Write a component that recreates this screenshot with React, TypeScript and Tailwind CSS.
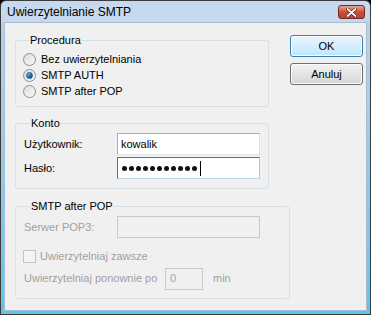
import React from 'react';

const font = { fontFamily: '"Liberation Sans", Arial, sans-serif' };

function Radio({ checked }: { checked?: boolean }) {
  return (
    <span className="w-[13px] h-[13px] rounded-full border border-[#8e8f8f] bg-gradient-to-br from-[#dcdcdc] to-[#fbfbfb] flex items-center justify-center shrink-0">
      {checked && (
        <span className="w-[7px] h-[7px] rounded-full bg-gradient-to-br from-[#9ad5f7] via-[#1b7fc6] to-[#0a3f78] border border-[#1b4f86]" />
      )}
    </span>
  );
}

function Group({ title, className, children }: { title: string; className: string; children: React.ReactNode }) {
  return (
    <fieldset className={`border border-[#d5dfe5] rounded-[3px] ${className}`}>
      <legend className="ml-[6px] px-[1px] text-[11px] leading-[13px] text-black">{title}</legend>
      {children}
    </fieldset>
  );
}

export default function App() {
  const dots = Array.from({ length: 11 });
  return (
    <div className="w-[371px] h-[315px] bg-black" style={font}>
      <div className="w-[371px] h-[315px] border border-[#3c3c3c] rounded-t-[6px] bg-gradient-to-b from-[#c7d9ee] to-[#bcd0ea] flex flex-col overflow-hidden">
        {/* Title bar */}
        <div className="h-[21px] flex items-center justify-between pl-[6px] pr-[5px]">
          <span className="text-[12px] text-black pt-[1px]">Uwierzytelnianie SMTP</span>
          <div className="w-[27px] h-[14px] mt-[1px] rounded-[3px] border border-[#6b2a22] bg-gradient-to-b from-[#e8a493] via-[#cf4b35] to-[#c1422c] flex items-center justify-center">
            <svg width="11" height="9" viewBox="0 0 11 9">
              <path d="M1.5 1 L9.5 8 M9.5 1 L1.5 8" stroke="#5a1a12" strokeWidth="3.2" strokeLinecap="round" />
              <path d="M1.5 1 L9.5 8 M9.5 1 L1.5 8" stroke="#ffffff" strokeWidth="1.8" strokeLinecap="round" />
            </svg>
          </div>
        </div>

        {/* Frame + body */}
        <div className="flex-1 px-[3px] pb-[3px] bg-gradient-to-b from-[#bcd0ea] to-[#5cc4ee]">
          <div className="h-full bg-[#f0f0f0] border border-[#a7bdd3] flex pl-[10px] pt-[11px] text-[11px] text-black">
            {/* Left column */}
            <div className="flex flex-col w-[275px]">
              <Group title="Procedura" className="w-[254px] h-[73px] pl-[7px] pt-[5px]">
                <div className="flex flex-col gap-[2px]">
                  <label className="flex items-center gap-[5px] h-[14px]"><Radio />Bez uwierzytelniania</label>
                  <label className="flex items-center gap-[5px] h-[14px]"><Radio checked />SMTP AUTH</label>
                  <label className="flex items-center gap-[5px] h-[14px]"><Radio />SMTP after POP</label>
                </div>
              </Group>

              <Group title="Konto" className="w-[254px] h-[72px] mt-[10px] pl-[8px] pt-[3px]">
                <div className="flex flex-col gap-[2px]">
                  <div className="flex items-center">
                    <span className="w-[93px]">Użytkownik:</span>
                    <div className="w-[143px] h-[22px] bg-white border border-[#abadb3] border-b-[#e3e9ef] border-r-[#dbdfe6] flex items-center px-[3px]">kowalik</div>
                  </div>
                  <div className="flex items-center">
                    <span className="w-[93px]">Hasło:</span>
                    <div className="w-[143px] h-[22px] bg-white border border-[#3d7bad] border-b-[#b7d9ed] border-r-[#a4c9e3] flex items-center pl-[4px] gap-[2px]">
                      {dots.map((_, i) => (
                        <span key={i} className="w-[5px] h-[5px] rounded-full bg-[#111]" />
                      ))}
                      <span className="w-[1px] h-[15px] bg-black ml-[1px]" />
                    </div>
                  </div>
                </div>
              </Group>

              <Group title="SMTP after POP" className="w-[275px] h-[99px] mt-[11px] pl-[8px] pt-[3px] text-[#a0a0a0]">
                <div className="flex items-center">
                  <span className="w-[93px]">Serwer POP3:</span>
                  <div className="w-[143px] h-[22px] bg-[#f0f0f0] border border-[#c8c8c8]" />
                </div>
                <label className="flex items-center gap-[4px] mt-[10px] -ml-[1px]">
                  <span className="w-[13px] h-[13px] border border-[#c4c4c4] bg-[#f4f4f4]" />
                  Uwierzytelniaj zawsze
                </label>
                <div className="flex items-center mt-[3px]">
                  <span className="w-[141px]">Uwierzytelniaj ponownie po</span>
                  <div className="w-[38px] h-[22px] bg-[#f0f0f0] border border-[#c8c8c8] flex items-center px-[4px]">0</div>
                  <span className="ml-[10px]">min</span>
                </div>
              </Group>
            </div>

            {/* Buttons */}
            <div className="flex flex-col gap-[6px] pt-[1px]">
              <button className="w-[73px] h-[22px] rounded-[3px] border border-[#3c7fb1] bg-gradient-to-b from-[#eaf6fd] to-[#bee6fd] text-[11px] shadow-[inset_0_0_0_1px_#ffffff]">OK</button>
              <button className="w-[73px] h-[22px] rounded-[3px] border border-[#707070] bg-gradient-to-b from-[#f2f2f2] to-[#d6d6d6] text-[11px] shadow-[inset_0_0_0_1px_#fbfbfb]">Anuluj</button>
            </div>
          </div>
        </div>
      </div>
    </div>
  );
}
